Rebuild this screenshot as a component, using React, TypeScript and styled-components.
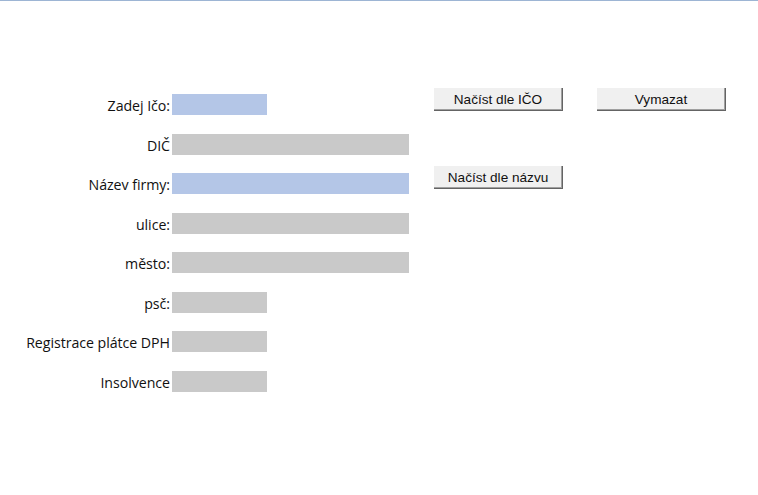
import React from 'react'
import styled, { createGlobalStyle } from 'styled-components'

const GlobalStyle = createGlobalStyle`
    html, body {
        margin:0;
        padding:0;
        background:#fff;
    }
    body {
        font-family:"Open Sans", "Liberation Sans", sans-serif;
    }
`

const Page = styled.div`
    width:758px;
    height:495px;
    border-top:1px solid #9db5d4;
    box-sizing:border-box;
    display:flex;
    align-items:flex-start;
`

const Form = styled.div`
    display:grid;
    grid-template-columns:170px auto;
    grid-auto-rows:21px;
    column-gap:2px;
    row-gap:18.5px;
    margin-top:93px;
`

const Label = styled.div`
    text-align:right;
    font:normal 14.2px/21px "Open Sans", "Liberation Sans", sans-serif;
    letter-spacing:-0.05px;
    color:#111;
    white-space:nowrap;
    padding-top:1px;
`

const Field = styled.div<{ $wide?: boolean; $input?: boolean }>`
    width:${p => (p.$wide ? 237 : 95)}px;
    height:21px;
    background:${p => (p.$input ? '#b4c6e7' : '#c9c9c9')};
`

const Buttons = styled.div`
    display:grid;
    grid-template-columns:129px 129px;
    column-gap:34px;
    row-gap:55px;
    margin-top:87px;
    margin-left:25px;
`

const Button = styled.button`
    width:129px;
    height:23px;
    padding:0;
    margin:0;
    border:none;
    border-right:1px solid #646464;
    border-bottom:1px solid #646464;
    box-shadow:inset -1px -1px 0 #a0a0a0;
    background:#f0f0f0;
    color:#111;
    font:normal 13.6px/21px "Liberation Sans", Arial, sans-serif;
    cursor:pointer;
`

const rows = [
    { label: 'Zadej Ičo:', wide: false, input: true },
    { label: 'DIČ', wide: true, input: false },
    { label: 'Název firmy:', wide: true, input: true },
    { label: 'ulice:', wide: true, input: false },
    { label: 'město:', wide: true, input: false },
    { label: 'psč:', wide: false, input: false },
    { label: 'Registrace plátce DPH', wide: false, input: false },
    { label: 'Insolvence', wide: false, input: false },
]

const App: React.FC = () => {
    return (
        <>
            <GlobalStyle />
            <Page>
                <Form>
                    {rows.map(r => (
                        <React.Fragment key={r.label}>
                            <Label>{r.label}</Label>
                            <Field $wide={r.wide} $input={r.input} />
                        </React.Fragment>
                    ))}
                </Form>
                <Buttons>
                    <Button>Načíst dle IČO</Button>
                    <Button>Vymazat</Button>
                    <Button>Načíst dle názvu</Button>
                </Buttons>
            </Page>
        </>
    )
}

export default App
